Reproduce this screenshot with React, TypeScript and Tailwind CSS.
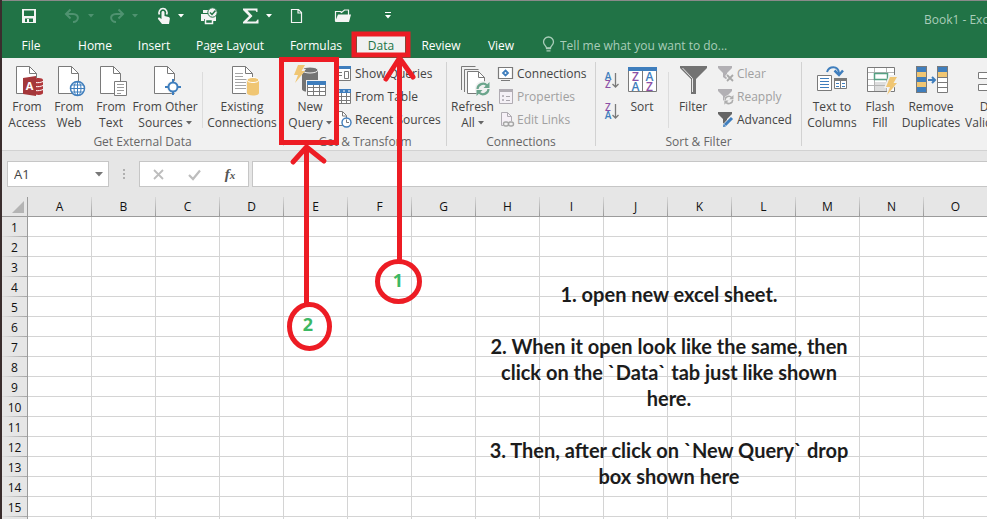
import React from "react";

type IconProps = { children: React.ReactNode; w?: number; h?: number };

function Svg({ children, w = 32, h = 32 }: IconProps) {
  return (
    <svg width={w} height={h} viewBox={`0 0 ${w} ${h}`} fill="none" className="block shrink-0 overflow-visible" aria-hidden="true">
      {children}
    </svg>
  );
}

const GREY = "#7a7a7a";
const BLUE = "#3f7ebd";
const GOLD = "#f0c673";

function Sheet({ x = 5, y = 0 }: { x?: number; y?: number }) {
  return (
    <g transform={`translate(${x} ${y})`} stroke={GREY}>
      <path d="M.5.5h13l7 7v20H.5z" fill="#fff" />
      <path d="M13.500.5v7h7" />
    </g>
  );
}

function Bolt({ x, y }: { x: number; y: number }) {
  return <path transform={`translate(${x} ${y})`} d="M4 0h7L7.500 6H11L1 18l3-8H0z" fill={GOLD} />;
}

function AccessIcon() {
  return (
    <Svg>
      <Sheet />
      <path d="M23 12h8v16h-8z" fill="#fff" />
      <path d="M24 12.500c5-1 8 0 8 1.500v13c0 1.500-3 2.500-8 1.500z" fill="#b0383c" />
      <path d="M24 16.500c3 .5 6 0 8-1M24 20.500c3 .5 6 0 8-1M24 24.500c3 .5 6 0 8-1" stroke="#fff" />
      <path d="M12 12l13-2v20l-13-2z" fill="#a4373a" />
      <text x="18.500" y="24" textAnchor="middle" fontSize="11" fontWeight="700" fill="#fff" fontFamily="Open Sans, sans-serif">A</text>
    </Svg>
  );
}

function WebIcon() {
  return (
    <Svg>
      <Sheet />
      <circle cx="24.500" cy="22.500" r="7" fill="#fff" stroke={BLUE} strokeWidth="1.500" />
      <ellipse cx="24.500" cy="22.500" rx="3.500" ry="7" stroke={BLUE} />
      <path d="M24.500 15.500v14M17.500 22.500h14M18.500 19h12M18.500 26h12" stroke={BLUE} />
    </Svg>
  );
}

function TextIcon() {
  return (
    <Svg>
      <Sheet />
      <path d="M19.500 15.500h12v14h-12z" fill="#fff" stroke={GREY} />
      <path d="M22 18.500h7M22 21.500h7M22 24.500h7M22 27.500h4" stroke="#9a9a9a" />
    </Svg>
  );
}

function OtherIcon() {
  return (
    <Svg>
      <Sheet />
      <circle cx="24" cy="21" r="6.500" fill="#f1f1f1" />
      <circle cx="24" cy="21" r="4.500" fill="#fff" stroke={BLUE} strokeWidth="2" />
      <path d="M24 13v4M24 25v4M16 21h4M28 21h4" stroke={BLUE} strokeWidth="2" />
    </Svg>
  );
}

function ExistingIcon() {
  return (
    <Svg>
      <Sheet x={6} />
      <path d="M9 7.500h8M9 10.500h8M9 13.500h14M9 16.500h12M9 19.500h11M9 22.500h11" stroke="#a5a5a5" />
      <path d="M20 13.500h14v17H20z" fill="#f1f1f1" />
      <path d="M21 14v13c0 1.500 2.500 2.500 6 2.500s6-1 6-2.500V14z" fill={GOLD} />
      <ellipse cx="27" cy="14" rx="6" ry="2.500" fill={GOLD} stroke="#fff" />
    </Svg>
  );
}

function QueryIcon() {
  return (
    <Svg>
      <path d="M8 4v19c0 2 3 3 8 3s8-1 8-3V4z" fill="#737373" />
      <ellipse cx="16" cy="4" rx="8" ry="3" fill="#737373" stroke="#f1f1f1" />
      <path d="M1 -3h9l-2 6h4L1 18z" fill="#f1f1f1" />
      <Bolt x={0} y={-1} />
      <path d="M12 14h21v17H12z" fill="#f1f1f1" />
      <path d="M13.500 17.500h18v12h-18z" fill="#fff" stroke={GREY} />
      <path d="M19.500 17v12M25.500 17v12M14 21.500h17M14 25.500h17" stroke={GREY} />
      <path d="M13 15h19v4H13z" fill={BLUE} />
    </Svg>
  );
}

function Cycle({ x, y, s, color }: { x: number; y: number; s: number; color: string }) {
  return (
    <g transform={`translate(${x} ${y}) scale(${s})`}>
      <path d="M1.500 7A5.500 5.500 0 0 1 11 3.500M12.500 7A5.500 5.500 0 0 1 3 10.500" stroke={color} strokeWidth="2.200" />
      <path d="M13.500 0v6h-6zM.5 14V8h6z" fill={color} />
    </g>
  );
}

function RefreshIcon() {
  return (
    <Svg>
      <path d="M4.500 24V.5h14M7.500 26V3.500h14" stroke={GREY} />
      <path d="M10.500 5.500h11l6 6v16h-17z" fill="#fff" stroke={GREY} />
      <path d="M21.500 5.500v6h6" stroke={GREY} />
      <circle cx="26" cy="23" r="8" fill="#f1f1f1" />
      <Cycle x={19} y={16} s={1} color="#6ba58c" />
    </Svg>
  );
}

function SortIcon() {
  const f = { fontFamily: "Open Sans, sans-serif", fontSize: 12, fontWeight: 600, textAnchor: "middle" as const };
  return (
    <Svg>
      <path d="M2.500 1.500h28v24h-28z" fill="#fff" stroke={GREY} />
      <path d="M16.500 4v22" stroke={GREY} />
      <path d="M2 1h29v4H2z" fill={BLUE} />
      <text x="9.500" y="14.500" fill="#8c50a6" {...f}>Z</text>
      <text x="9.500" y="24.500" fill={BLUE} {...f}>A</text>
      <text x="23.500" y="14.500" fill={BLUE} {...f}>A</text>
      <text x="23.500" y="24.500" fill="#8c50a6" {...f}>Z</text>
    </Svg>
  );
}

function OrderIcon({ top, bottom }: { top: string; bottom: string }) {
  const f = { fontFamily: "Open Sans, sans-serif", fontSize: 10, fontWeight: 600, textAnchor: "middle" as const };
  return (
    <Svg w={16} h={17}>
      <text x="4" y="8" fill={top === "A" ? BLUE : "#8c50a6"} {...f}>{top}</text>
      <text x="4" y="16" fill={bottom === "A" ? BLUE : "#8c50a6"} {...f}>{bottom}</text>
      <path d="M11.500 1v14M8.500 12l3 3 3-3" stroke={GREY} strokeWidth="1.300" />
    </Svg>
  );
}

function FilterIcon() {
  return (
    <Svg>
      <path d="M3 0h27v2L19 13v15h-5V13L3 2z" fill="#737373" />
      <path d="M5.500 2l10 10.500V26" stroke="#e8e8e8" />
    </Svg>
  );
}

function ColumnsIcon() {
  return (
    <Svg>
      <path d="M1.500 9.500h14v15h-14z" fill="#fff" stroke={GREY} />
      <path d="M4 12.500h9M4 15.500h9M4 18.500h9M4 21.500h9" stroke={BLUE} />
      <path d="M18.500 12.500h12v10h-12z" fill="#fff" stroke={GREY} />
      <path d="M18 12h13v3H18zM24 13h1v10h-1z" fill={GREY} />
      <path d="M20 17.500h3M20 20.500h3M26 17.500h3M26 20.500h3" stroke={BLUE} />
      <path d="M11 6c2-6 11-7 12 1" stroke={BLUE} strokeWidth="2" />
      <path d="M18.500 4.500L23 9l4-4.500" stroke={BLUE} strokeWidth="2.500" />
    </Svg>
  );
}

function FlashIcon() {
  return (
    <Svg>
      <path d="M3.500 1.500h27v24h-27z" fill="#fff" stroke={GREY} />
      <path d="M11 16h12v9H11z" fill="#dedede" />
      <path d="M10.500 2v23M22.500 2v23M4 6.500h26M4 13.500h26M4 19.500h26" stroke="#b5b5b5" />
      <path d="M10.500 7.500h13v6h-13z" fill="#fff" stroke="#56a183" strokeWidth="1.500" />
      <path d="M25 9h9l-2 7h3L21 32l3-10h-4z" fill="#f1f1f1" />
      <Bolt x={22} y={11} />
    </Svg>
  );
}

function DuplicatesIcon() {
  return (
    <Svg>
      <path d="M1 0h11v27H1z" fill={BLUE} />
      <path d="M1 6h11v5H1zM1 16h11v5H1z" fill={GOLD} />
      <path d="M22 0h11v6H22z" fill={BLUE} />
      <path d="M22 6h11v5H22z" fill={GOLD} />
      <path d="M22 11h11v16H22z" fill="#fff" />
      <path d="M22 16.500h11M22 21.500h11M22 11.500h11M1.500.5h10v26h-10zM22.500.5h10v26h-10z" stroke={GREY} />
      <path d="M13 14h7M17 11l3 3-3 3" stroke={BLUE} strokeWidth="2" />
    </Svg>
  );
}

function ValidationIcon() {
  return (
    <Svg>
      <path d="M1.500 6.500h22v6h-22zM1.500 18.500h22v6h-22z" fill="#fff" stroke={GREY} />
      <path d="M15 10l3 3 8-10" stroke="#56a183" strokeWidth="2" />
    </Svg>
  );
}

function PanelIcon() {
  return (
    <Svg w={16} h={16}>
      <path d="M.5.5h14v14H.5z" fill="#fff" stroke={GREY} />
      <path d="M0 0h15v3H0z" fill={BLUE} />
      <path d="M8.500 5.500h4v7h-4zM2 6.500h4M2 9.500h4" stroke={GREY} />
    </Svg>
  );
}

function TableIcon() {
  return (
    <Svg w={16} h={16}>
      <path d="M.5.5h14v14H.5z" fill="#fff" stroke={GREY} />
      <path d="M5.500 4v10M10.500 4v10M1 7.500h14M1 11.500h14" stroke={GREY} />
      <path d="M0 0h15v4H0z" fill={BLUE} />
      <path d="M2 2h2M7 2h2M12 2h2" stroke="#fff" />
    </Svg>
  );
}

function RecentIcon() {
  return (
    <Svg w={16} h={16}>
      <path d="M.5-.5h6l4 4v10H.5z" fill="#fff" stroke={GREY} />
      <path d="M6.500 0v4h4" stroke={GREY} />
      <circle cx="10.500" cy="10.500" r="4.500" fill="#fff" stroke={BLUE} strokeWidth="1.400" />
      <path d="M10.500 7.500v3h2.500" stroke={GREY} />
    </Svg>
  );
}

function ConnectionsIcon() {
  return (
    <Svg w={16} h={16}>
      <path d="M.5 1.500h14v11H.5z" fill="#fff" stroke={GREY} strokeWidth="1.200" />
      <path d="M3 14.500h9" stroke={GREY} />
      <path d="M7.500 4.500l2.500 2.500-2.500 2.500L5 7z" stroke={BLUE} strokeWidth="1.800" />
    </Svg>
  );
}

function PropertiesIcon() {
  return (
    <Svg w={16} h={16}>
      <path d="M1.500.5h13v14h-13z" fill="#f4f0f6" stroke="#b0acb3" />
      <path d="M1 0h14v3H1z" fill="#b0acb3" />
      <path d="M4.500 6.500h1v1h-1zM4.500 10.500h1v1h-1z" stroke="#a9a5ac" />
      <path d="M8 7.500h4M8 11.500h4" stroke="#a9a5ac" />
    </Svg>
  );
}

function LinksIcon() {
  return (
    <Svg w={16} h={16}>
      <path d="M3.500.5h6l4 4v9h-10z" fill="#f6f0f7" stroke="#b0acb3" />
      <path d="M9.500.5v4h4" stroke="#b0acb3" />
      <path d="M5 9h10v6H5z" fill="#f1f1f1" />
      <rect x="5.500" y="10" width="5" height="4" rx="2" stroke="#a5a5a5" strokeWidth="1.400" />
      <rect x="10.500" y="10" width="5" height="4" rx="2" stroke="#a5a5a5" strokeWidth="1.400" />
    </Svg>
  );
}

function SmallFunnel({ color }: { color: string }) {
  return <path d="M0 0h14v2L9 7v7L5 11V7L0 2z" fill={color} />;
}

function ClearIcon() {
  return (
    <Svg w={16} h={16}>
      <SmallFunnel color="#b2b0b4" />
      <path d="M8.500 8.500l7 7M15.500 8.500l-7 7" stroke="#f1f1f1" strokeWidth="4" />
      <path d="M9 9l6 6M15 9l-6 6" stroke="#a9a9a9" strokeWidth="1.800" />
    </Svg>
  );
}

function ReapplyIcon() {
  return (
    <Svg w={16} h={16}>
      <SmallFunnel color="#b2b0b4" />
      <circle cx="11" cy="11" r="5" fill="#f1f1f1" />
      <Cycle x={6} y={6} s={0.7} color="#adadad" />
    </Svg>
  );
}

function AdvancedIcon() {
  return (
    <Svg w={16} h={16}>
      <SmallFunnel color="#666" />
      <path d="M6 15l9-10" stroke="#f1f1f1" strokeWidth="5" />
      <path d="M7 13l7-7" stroke={BLUE} strokeWidth="3" />
      <path d="M5 15l.5-3 2.500 2.500z" fill={BLUE} />
    </Svg>
  );
}

function Caret({ className = "text-[#666]" }: { className?: string }) {
  return (
    <svg width="6" height="4" viewBox="0 0 6 4" className={`inline-block shrink-0 ${className}`} aria-hidden="true">
      <path d="M0 0h6L3 3.500z" fill="currentColor" />
    </svg>
  );
}

function BigButton({ icon, lines, drop, className }: { icon: React.ReactNode; lines: string[]; drop?: boolean; className: string }) {
  return (
    <button type="button" className={`flex shrink-0 flex-col items-center whitespace-nowrap leading-4 ${className}`}>
      <span className="mb-px block">{icon}</span>
      {lines.map((line, i) => (
        <span key={line} className="flex items-center gap-[3px]">
          {line}
          {drop && i === lines.length - 1 && <Caret />}
        </span>
      ))}
    </button>
  );
}

function SmallButton({ icon, label, disabled }: { icon: React.ReactNode; label: string; disabled?: boolean }) {
  return (
    <button type="button" disabled={disabled} className={`flex h-[23px] items-center gap-[3px] whitespace-nowrap ${disabled ? "text-[#a0a0a0]" : ""}`}>
      {icon}
      <span>{label}</span>
    </button>
  );
}

function Group({ label, className, children }: { label: string; className: string; children: React.ReactNode }) {
  return (
    <section aria-label={label} className={`my-1 flex shrink-0 flex-col border-r border-[#d2d2d2] ${className}`}>
      <div className="flex h-[72px] shrink-0">{children}</div>
      <div className="shrink-0 text-center leading-4 text-[#666]">{label}</div>
    </section>
  );
}

function Divider({ className }: { className: string }) {
  return <div className={`mt-1.5 h-14 w-px shrink-0 bg-[#dcdcdc] ${className}`} />;
}

function QuickButton({ label, className, children }: { label: string; className: string; children: React.ReactNode }) {
  return (
    <button type="button" aria-label={label} className={`flex h-4 shrink-0 items-center gap-1.5 ${className}`}>
      {children}
    </button>
  );
}

function QuickAccess() {
  return (
    <div className="flex h-[30px] items-center pl-5 text-white">
      <QuickButton label="Save" className="">
        <Svg w={14} h={14}>
          <path d="M0 0h14v14H0z" fill="#f4f4f4" />
          <path d="M2 1.500h10V7H2zM3 9.500h8V13H3z" fill="#217346" />
          <path d="M5 10h2v3H5z" fill="#f4f4f4" />
        </Svg>
      </QuickButton>
      <QuickButton label="Undo" className="ml-7 text-[#4f9270]">
        <Svg w={18} h={16}>
          <path d="M2 6h7c7 0 6 8 0 8M6.500 1.500L2 6l4.500 4.500" stroke="currentColor" strokeWidth="2" />
        </Svg>
        <Caret className="text-[#4f9270]" />
      </QuickButton>
      <QuickButton label="Redo" className="ml-4 text-[#4f9270]">
        <Svg w={16} h={16}>
          <path d="M13 6H6C-1 6 0 14 6 14M8.500 1.500L13 6l-4.500 4.500" stroke="currentColor" strokeWidth="2" />
        </Svg>
        <Caret className="text-[#4f9270]" />
      </QuickButton>
      <QuickButton label="Touch mode" className="ml-[18px]">
        <Svg w={16} h={16}>
          <path d="M3.500 6.500a4 4 0 1 1 7 0" stroke="#f4f4f4" strokeWidth="1.600" />
          <path d="M5.500 4.500c0-2 3-2 3 0V8l4 1c1 .3 1.500 1 1.300 2L13 16H6l-4-5c-.5-1 1-2 2-1l1.500 1z" fill="#f4f4f4" />
        </Svg>
        <Caret className="text-white" />
      </QuickButton>
      <QuickButton label="Print preview" className="ml-4">
        <Svg w={18} h={16}>
          <path d="M1 6h15v7h-3v-2H4v2H1zM3 2h6v3H3z" fill="#f4f4f4" />
          <path d="M5.500 11.500h7v4h-7z" fill="#217346" stroke="#f4f4f4" strokeWidth="1.500" />
          <circle cx="12.500" cy="4.500" r="4.700" fill="#f4f4f4" stroke="#217346" />
          <path d="M10 4.500l2 2 3.500-4" stroke="#217346" strokeWidth="1.500" />
        </Svg>
      </QuickButton>
      <QuickButton label="AutoSum" className="ml-6">
        <Svg w={18} h={16}>
          <path d="M1 .5h14.500V4h-1l-1-1.500H5.500L10.500 8l-5.500 5.500h9l1.500-2h1V15.500H1V14l6-6L1 2z" fill="#f4f4f4" />
        </Svg>
        <Caret className="text-white" />
      </QuickButton>
      <QuickButton label="New" className="ml-[18px]">
        <Svg w={14} h={16}>
          <path d="M1.500 1.500h7l3 3v10h-10zM8 1.500V5h3.500" stroke="#f4f4f4" strokeWidth="1.200" />
        </Svg>
      </QuickButton>
      <QuickButton label="Open" className="ml-[30px]">
        <Svg w={18} h={16}>
          <path d="M1.500 13V3.500h5l1 1 3-2.500h4v5" stroke="#f4f4f4" strokeWidth="1.200" />
          <path d="M4 6.500h13L15 14H1z" fill="#f4f4f4" />
        </Svg>
      </QuickButton>
      <QuickButton label="Customize toolbar" className="ml-[33px]">
        <Svg w={7} h={8}>
          <path d="M0 .5h6" stroke="#fff" />
          <path d="M0 3h6L3 6.500z" fill="#fff" />
        </Svg>
      </QuickButton>
      <div className="ml-auto w-[63px] shrink-0 overflow-hidden whitespace-nowrap pt-2 text-[#a9cdb9]">Book1 - Excel</div>
    </div>
  );
}

const TABS: [string, string][] = [
  ["File", "w-[58px]"],
  ["Home", "w-[70px]"],
  ["Insert", "w-12"],
  ["Page Layout", "w-[104px]"],
  ["Formulas", "w-[68px]"],
  ["Data", "w-[62px]"],
  ["Review", "w-[58px]"],
  ["View", "w-[62px]"],
];

function TabBar() {
  return (
    <nav className="flex h-[27px] items-center text-white">
      {TABS.map(([name, width]) => (
        <button
          key={name}
          type="button"
          className={`flex h-[27px] shrink-0 items-center justify-center whitespace-nowrap ${width}`}
        >
          {name === "Data" ? (
            <span className="flex h-[17px] w-12 items-center justify-center bg-[#f1f1f1] pt-0.5 text-[#217346]">{name}</span>
          ) : (
            <span className="pt-0.5">{name}</span>
          )}
        </button>
      ))}
      <label className="ml-[11px] flex flex-1 items-center gap-1.5 text-[#a9cdb9]">
        <Svg w={11} h={15}>
          <path d="M3.500 11c0-2-3-3-3-6a5 5 0 0 1 10 0c0 3-3 4-3 6z" stroke="currentColor" strokeWidth="1.300" />
          <path d="M3 11.500h5M3.500 13.800h4" stroke="currentColor" strokeWidth="1.300" />
        </Svg>
        <input
          aria-label="Tell me what you want to do"
          placeholder="Tell me what you want to do..."
          className="w-60 bg-transparent pt-0.5 outline-none placeholder:text-[#a9cdb9]"
        />
      </label>
    </nav>
  );
}

function Ribbon() {
  return (
    <div className="flex h-[93px] overflow-hidden border-b border-[#d2d2d2] bg-[#f1f1f1] text-[#444]">
      <Group label="Get External Data" className="w-[282px]">
        <div className="flex pl-1 pt-1">
          <BigButton icon={<AccessIcon />} lines={["From", "Access"]} className="w-[42px]" />
          <BigButton icon={<WebIcon />} lines={["From", "Web"]} className="w-[42px]" />
          <BigButton icon={<TextIcon />} lines={["From", "Text"]} className="w-[42px]" />
          <BigButton icon={<OtherIcon />} lines={["From Other", "Sources"]} drop className="w-[66px]" />
          <Divider className="ml-1 mr-1" />
          <BigButton icon={<ExistingIcon />} lines={["Existing", "Connections"]} className="w-[70px]" />
        </div>
      </Group>
      <Group label="Get & Transform" className="w-[163px]">
        <div className="flex pl-0.5 pt-1">
          <BigButton icon={<QueryIcon />} lines={["New", "Query"]} drop className="w-12" />
        </div>
        <div className="flex flex-col pl-0.5">
          <SmallButton icon={<PanelIcon />} label="Show Queries" />
          <SmallButton icon={<TableIcon />} label="From Table" />
          <SmallButton icon={<RecentIcon />} label="Recent Sources" />
        </div>
      </Group>
      <Group label="Connections" className="w-[149px]">
        <div className="flex pt-1">
          <BigButton icon={<RefreshIcon />} lines={["Refresh", "All"]} drop className="w-[51px]" />
        </div>
        <div className="flex flex-col">
          <SmallButton icon={<ConnectionsIcon />} label="Connections" />
          <SmallButton icon={<PropertiesIcon />} label="Properties" disabled />
          <SmallButton icon={<LinksIcon />} label="Edit Links" disabled />
        </div>
      </Group>
      <Group label="Sort & Filter" className="w-[206px]">
        <div className="flex flex-col gap-3.5 pl-2 pt-2.5">
          <button type="button" aria-label="Sort A to Z"><OrderIcon top="A" bottom="Z" /></button>
          <button type="button" aria-label="Sort Z to A"><OrderIcon top="Z" bottom="A" /></button>
        </div>
        <div className="flex pt-1">
          <BigButton icon={<SortIcon />} lines={["Sort"]} className="w-11" />
          <Divider className="ml-1" />
          <BigButton icon={<FilterIcon />} lines={["Filter"]} className="w-12" />
        </div>
        <div className="flex flex-col pl-px">
          <SmallButton icon={<ClearIcon />} label="Clear" disabled />
          <SmallButton icon={<ReapplyIcon />} label="Reapply" disabled />
          <SmallButton icon={<AdvancedIcon />} label="Advanced" />
        </div>
      </Group>
      <div className="flex pl-1 pt-2">
        <BigButton icon={<ColumnsIcon />} lines={["Text to", "Columns"]} className="w-[52px]" />
        <BigButton icon={<FlashIcon />} lines={["Flash", "Fill"]} className="w-11" />
        <BigButton icon={<DuplicatesIcon />} lines={["Remove", "Duplicates"]} className="w-[58px]" />
        <BigButton icon={<ValidationIcon />} lines={["Data", "Validation"]} className="w-[66px]" />
      </div>
    </div>
  );
}

function FormulaBar() {
  return (
    <div className="flex h-[46px] items-start bg-[#e6e6e6] pl-[5px] pt-2.5">
      <div className="flex h-[26px] w-[102px] shrink-0 items-center border border-[#c6c6c6] bg-white pr-[5px] text-[#444]">
        <input aria-label="Name box" defaultValue="A1" className="w-full min-w-0 bg-transparent pl-1.5 pt-0.5 text-[13px] outline-none" />
        <button type="button" aria-label="Show names">
          <svg width="8" height="5" viewBox="0 0 8 5" className="block" aria-hidden="true">
            <path d="M0 0h8L4 4.500z" fill="#777" />
          </svg>
        </button>
      </div>
      <div className="flex h-[26px] w-[30px] shrink-0 flex-col items-center justify-center gap-0.5">
        {[0, 1, 2].map((n) => <span key={n} className="size-0.5 bg-[#b0b0b0]" />)}
      </div>
      <div className="flex h-[26px] w-[110px] shrink-0 items-center border border-[#c6c6c6] bg-white">
        <button type="button" aria-label="Cancel" className="flex w-9 justify-center">
          <Svg w={11} h={11}><path d="M1 1l9 9M10 1l-9 9" stroke="#bdbdbd" strokeWidth="1.800" /></Svg>
        </button>
        <button type="button" aria-label="Enter" className="flex w-9 justify-center">
          <Svg w={13} h={11}><path d="M1 6l4 4 7-8.500" stroke="#bdbdbd" strokeWidth="2.200" /></Svg>
        </button>
        <button type="button" aria-label="Insert function" className="w-9 text-center font-['Liberation_Serif',serif] text-[15px] font-bold italic leading-5 text-[#555]">
          f<span className="text-[11px]">x</span>
        </button>
      </div>
      <input aria-label="Formula" className="ml-[3px] h-[26px] min-w-0 flex-1 border border-r-0 border-[#c6c6c6] bg-white px-2 outline-none" />
    </div>
  );
}

const COLUMNS = "ABCDEFGHIJKLMNOPQRSTUVWXYZ".split("");
const ROWS = Array.from({ length: 40 }, (_, i) => i + 1);

function Grid() {
  return (
    <div className="min-h-0 flex-1 overflow-hidden bg-white">
      <table className="w-max table-fixed border-separate border-spacing-0 text-[#111]">
        <colgroup>
          <col className="w-[26px]" />
          {COLUMNS.map((c) => <col key={c} className="w-16" />)}
        </colgroup>
        <thead>
          <tr className="h-5 bg-[#e6e6e6]">
            <th className="h-5 border-b border-r border-[#9b9b9b] p-0">
              <svg width="12" height="12" viewBox="0 0 12 12" className="ml-auto mr-[3px] block" aria-hidden="true">
                <path d="M12 0v12H0z" fill="#b4b4b4" />
              </svg>
            </th>
            {COLUMNS.map((c) => (
              <th key={c} className="h-5 border-b border-[#9b9b9b] bg-[linear-gradient(to_bottom,#d8d8d8,#9b9b9b)] p-0 font-normal">
                <span className="mr-px block h-[19px] bg-[#e6e6e6] leading-5">{c}</span>
              </th>
            ))}
          </tr>
        </thead>
        <tbody>
          {ROWS.map((r) => (
            <tr key={r} className="h-5">
              <th className="h-5 border-r border-[#9b9b9b] bg-[linear-gradient(to_right,#e0e0e0,#a5a5a5)] p-0 font-normal">
                <span className="mb-px block h-[19px] bg-[#e6e6e6] leading-[22px]">{r}</span>
              </th>
              {COLUMNS.map((c) => <td key={c} className="h-5 border-b border-r border-[#d4d4d4] p-0" />)}
            </tr>
          ))}
        </tbody>
      </table>
    </div>
  );
}

function Annotations() {
  return (
    <div className="pointer-events-none absolute inset-0">
      <svg width="100%" height="100%" fill="none" stroke="#ed1c24" strokeWidth="5" className="absolute inset-0">
        <rect x="354" y="34" width="54" height="21" />
        <rect x="281.500" y="59.500" width="55" height="83" />
        <path d="M399.500 262V58" />
        <path d="M386 79l13.500-21L413 77" strokeLinecap="round" strokeLinejoin="round" />
        <path d="M306.500 304V147" />
        <path d="M293 162l13.500-15L324 161" strokeLinecap="round" strokeLinejoin="round" />
        <ellipse cx="398.500" cy="281.500" rx="21" ry="20" />
        <ellipse cx="309.500" cy="326.500" rx="20" ry="22" />
      </svg>
      <span className="absolute left-[388px] top-[268px] w-5 text-center text-lg font-bold leading-6 text-[#3cb863]">1</span>
      <span className="absolute left-[298px] top-[312px] w-5 text-center text-lg font-bold leading-6 text-[#3cb863]">2</span>
      <div className="absolute left-[469px] top-[281px] flex w-[400px] flex-col gap-[26px] whitespace-nowrap text-center font-['Lato',sans-serif] text-xl font-bold leading-[26px] text-[#1c1c1c]">
        <p>1. open new excel sheet.</p>
        <p>2. When it open look like the same, then<br />click on the `Data` tab just like shown<br />here.</p>
        <p>3. Then, after click on `New Query` drop<br />box shown here</p>
      </div>
    </div>
  );
}

export default function App() {
  return (
    <div className="relative flex h-screen overflow-hidden bg-[#3a2d2d] pl-0.5 font-['Open_Sans','Noto_Sans',sans-serif] text-xs">
      <div className="flex min-w-0 flex-1 flex-col">
        <header className="border-t border-[#8a8a8a] bg-[#217346]">
          <QuickAccess />
          <TabBar />
        </header>
        <Ribbon />
        <FormulaBar />
        <Grid />
      </div>
      <Annotations />
    </div>
  );
}
